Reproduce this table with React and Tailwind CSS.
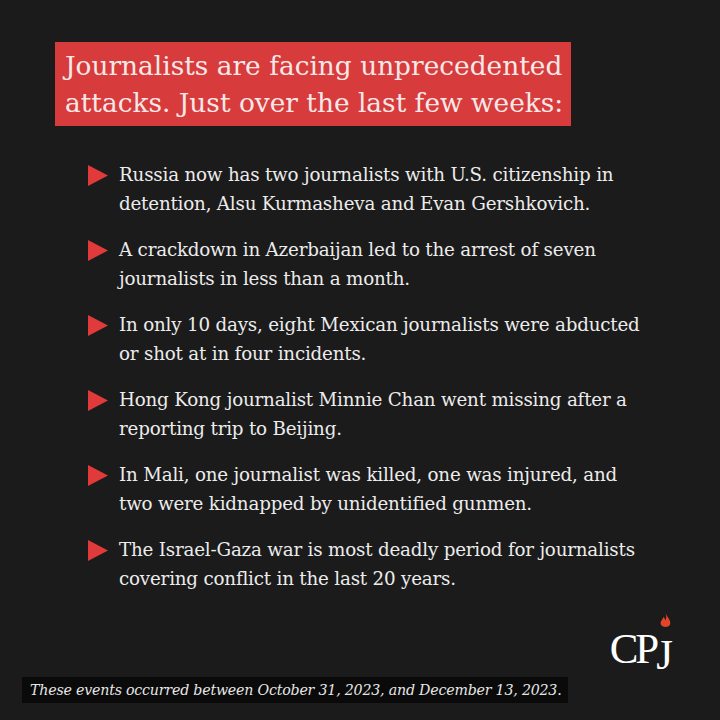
import React from "react";

const items = [
  ["Russia now has two journalists with U.S. citizenship in", "detention, Alsu Kurmasheva and Evan Gershkovich."],
  ["A crackdown in Azerbaijan led to the arrest of seven", "journalists in less than a month."],
  ["In only 10 days, eight Mexican journalists were abducted", "or shot at in four incidents."],
  ["Hong Kong journalist Minnie Chan went missing after a", "reporting trip to Beijing."],
  ["In Mali, one journalist was killed, one was injured, and", "two were kidnapped by unidentified gunmen."],
  ["The Israel-Gaza war is most deadly period for journalists", "covering conflict in the last 20 years."],
];

function Tri() {
  return (
    <svg width="20" height="21" viewBox="0 0 20 21" className="shrink-0 mt-[5px]">
      <polygon points="0,0 20,10.5 0,21" fill="#e03a3a" />
    </svg>
  );
}

export default function App() {
  return (
    <div
      className="w-[720px] h-[720px] bg-[#1b1b1b] flex flex-col overflow-hidden"
      style={{ fontFamily: '"DejaVu Serif", "Liberation Serif", serif' }}
    >
      <div className="ml-[55px] mt-[42px] w-[516px] h-[84px] bg-[#d73b3b] pl-[10px] pt-[5px] text-[#f6e8e8] text-[26.4px] leading-[37px] whitespace-nowrap">
        <div>Journalists are facing unprecedented</div>
        <div>attacks. Just over the last few weeks:</div>
      </div>

      <div className="ml-[88px] mt-[34px] flex flex-col gap-[17px]">
        {items.map((it, i) => (
          <div key={i} className="flex gap-[11px]">
            <Tri />
            <div className="text-[#ececec] text-[18.3px] leading-[29px] tracking-[-0.2px] whitespace-nowrap">
              <div>{it[0]}</div>
              <div>{it[1]}</div>
            </div>
          </div>
        ))}
      </div>

      <div className="flex justify-end mr-[50px] mt-[auto]">
        <div
          className="relative text-white text-[43px] leading-[44px] tracking-[-3px]"
          style={{ fontFamily: '"Liberation Serif", serif' }}
        >
          CP<span className="inline-block translate-y-[6px]">J</span>
          <svg width="13" height="17" viewBox="0 0 14 18" className="absolute right-[-2px] top-[-14px]">
            <path d="M7 0 C9 5 13 7 12 12 C11 16 3 16 2 12 C1 9 4 7 5 4 C6 6 7 7 7 8 C8 6 8 3 7 0Z" fill="#e2452a" />
          </svg>
        </div>
      </div>

      <div className="ml-[22px] mt-[6px] mb-[17px] w-[546px] h-[26px] bg-[#0a0a0a] px-[8px] text-[#e6e6e6] italic text-[14.2px] leading-[26px] self-start whitespace-nowrap tracking-[-0.2px]">
        These events occurred between October 31, 2023, and December 13, 2023.
      </div>
    </div>
  );
}
